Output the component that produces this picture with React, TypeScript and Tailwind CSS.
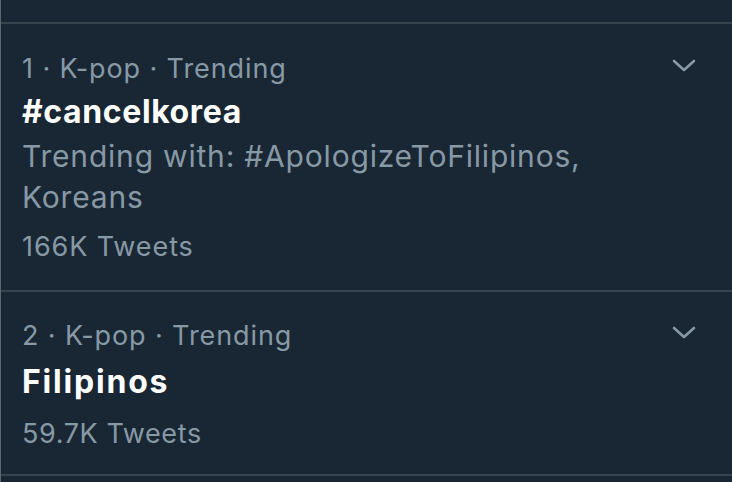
import React from "react";

const Chevron = ({ mt }: { mt: string }) => (
  <svg
    width="28"
    height="16"
    viewBox="0 0 28 16"
    className={`shrink-0 ${mt}`}
    fill="none"
    stroke="#8899a6"
    strokeWidth="2.6"
    strokeLinecap="round"
    strokeLinejoin="round"
  >
    <polyline points="4,3 14,12 24,3" />
  </svg>
);

export default function App() {
  return (
    <div
      className="w-[732px] h-[482px] overflow-hidden bg-[#192734] border-l border-[#5b6670] text-[#8899a6]"
      style={{ fontFamily: "Inter, 'Noto Sans', sans-serif" }}
    >
      <div className="h-[24px] border-b-2 border-[#38444d]" />

      <div className="flex items-start justify-between pl-[21px] pr-[34px] pt-[27px] pb-[25px] border-b-2 border-[#38444d]">
        <div className="flex flex-col">
          <div className="text-[27px] leading-[36px] tracking-[0.9px]">1 · K-pop · Trending</div>
          <div className="mt-[3px] text-[32px] leading-[44px] font-bold tracking-[0.6px] text-white">#cancelkorea</div>
          <div className="mt-[2px] text-[30px] leading-[41px] tracking-[0.8px]">
            Trending with: #ApologizeToFilipinos,
            <br />
            Koreans
          </div>
          <div className="mt-[11px] text-[27px] leading-[36px] tracking-[0.9px]">166K Tweets</div>
        </div>
        <Chevron mt="mt-[7px]" />
      </div>

      <div className="flex items-start justify-between pl-[21px] pr-[34px] pt-[26px] pb-[22px] border-b-2 border-[#38444d]">
        <div className="flex flex-col">
          <div className="text-[27px] leading-[36px] tracking-[0.9px]">2 · K-pop · Trending</div>
          <div className="mt-[6px] text-[32px] leading-[44px] font-bold tracking-[1.8px] text-white">Filipinos</div>
          <div className="mt-[12px] text-[27px] leading-[36px] tracking-[0.6px]">59.7K Tweets</div>
        </div>
        <Chevron mt="mt-[7px]" />
      </div>
    </div>
  );
}
